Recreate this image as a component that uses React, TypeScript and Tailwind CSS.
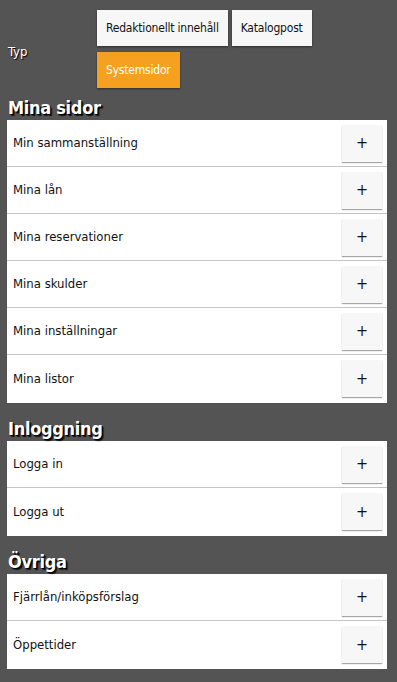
import React from 'react'

const sections: { title: string; items: string[] }[] = [
  {
    title: 'Mina sidor',
    items: [
      'Min sammanställning',
      'Mina lån',
      'Mina reservationer',
      'Mina skulder',
      'Mina inställningar',
      'Mina listor',
    ],
  },
  { title: 'Inloggning', items: ['Logga in', 'Logga ut'] },
  { title: 'Övriga', items: ['Fjärrlån/inköpsförslag', 'Öppettider'] },
]

const font = { fontFamily: '"DejaVu Sans Condensed", "Liberation Sans", sans-serif' }

function TypeButton({ label, active }: { label: string; active?: boolean }) {
  return (
    <button
      className={`h-[36px] px-[9px] text-[12px] tracking-[-0.2px] shadow-[0_1px_2px_rgba(0,0,0,0.45)] ${
        active ? 'bg-[#f6a01f] text-white' : 'bg-[#f7f7f7] text-[#111]'
      }`}
    >
      {label}
    </button>
  )
}

export default function App() {
  return (
    <div className="min-h-[682px] w-[397px] bg-[#545454] pt-[10px] pb-[14px]" style={font}>
      {/* Type filter */}
      <div className="flex items-center">
        <span className="w-[97px] pt-[6px] pl-[8px] text-[13px] text-white [text-shadow:1px_1px_1px_#000]">Typ</span>
        <div className="flex w-[230px] flex-wrap gap-x-[4px] gap-y-[6px]">
          <TypeButton label="Redaktionellt innehåll" />
          <TypeButton label="Katalogpost" />
          <TypeButton label="Systemsidor" active />
        </div>
      </div>

      {sections.map((s, i) => (
        <div key={s.title} className={i === 0 ? 'mt-[7px]' : 'mt-[13px]'}>
          <h2 className="pl-[8px] text-[18px] leading-[25px] font-bold tracking-[-0.3px] text-white [text-shadow:1px_1px_0_#000,2px_2px_1px_#111]">
            {s.title}
          </h2>
          <ul className="ml-[7px] w-[380px] bg-white pb-[1px]">
            {s.items.map((item, j) => (
              <li
                key={item}
                className={`flex h-[47px] items-center justify-between pr-[5px] pl-[6px] ${
                  j < s.items.length - 1 ? 'border-b border-[#c4c4c4]' : ''
                }`}
              >
                <span className="text-[13px] text-[#111]">{item}</span>
                <button className="flex h-[37px] w-[40px] items-center justify-center bg-[#f7f7f7] text-[16px] text-[#111] shadow-[0_1px_1px_rgba(0,0,0,0.35)]">
                  +
                </button>
              </li>
            ))}
          </ul>
        </div>
      ))}
    </div>
  )
}
